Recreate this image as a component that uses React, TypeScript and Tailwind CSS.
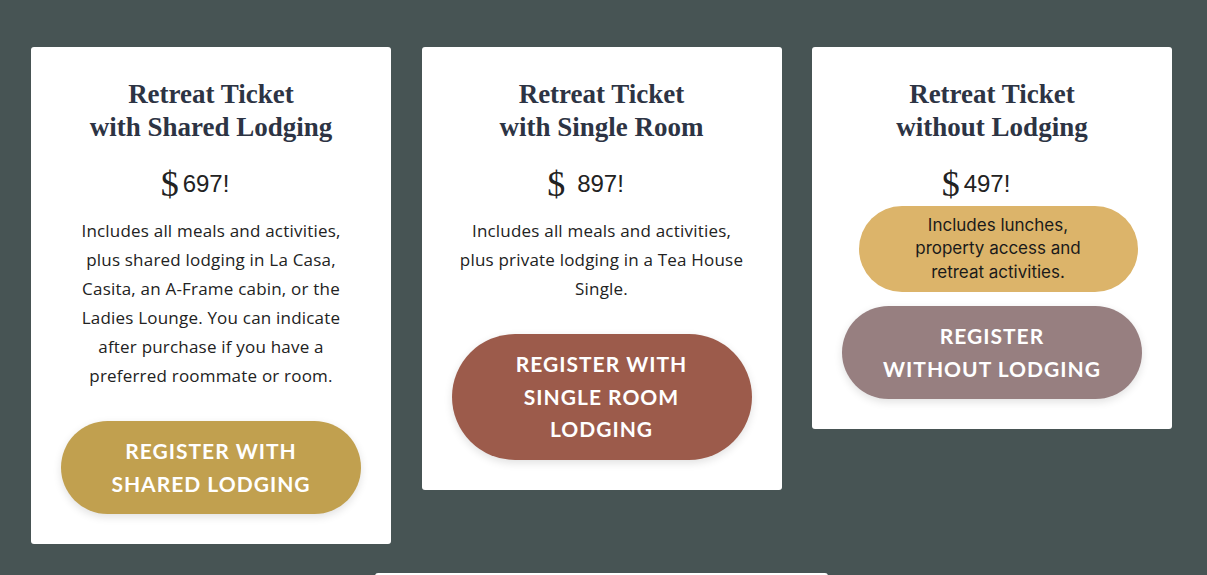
const cards = [
  {
    line2: "with Shared Lodging",
    price: "697!",
    gap: false,
    desc: [
      "Includes all meals and activities,",
      "plus shared lodging in La Casa,",
      "Casita, an A-Frame cabin, or the",
      "Ladies Lounge. You can indicate",
      "after purchase if you have a",
      "preferred roommate or room.",
    ],
    button: ["REGISTER WITH", "SHARED LODGING"],
    color: "bg-[#c1a04f]",
  },
  {
    line2: "with Single Room",
    price: "897!",
    gap: true,
    desc: ["Includes all meals and activities,", "plus private lodging in a Tea House", "Single."],
    button: ["REGISTER WITH", "SINGLE ROOM", "LODGING"],
    color: "bg-[#9c5b4b]",
  },
  {
    line2: "without Lodging",
    price: "497!",
    gap: false,
    desc: [] as string[],
    button: ["REGISTER", "WITHOUT LODGING"],
    color: "bg-[#977f80]",
  },
];

function Card({ card }: { card: (typeof cards)[number] }) {
  return (
    <div className="w-[360px] bg-white rounded-[3px] pt-[31px] pb-[30px] px-[30px] flex flex-col items-center">
      <h2 className="font-['Liberation_Serif',serif] font-bold text-[27px] leading-[33px] text-[#2d3444] text-center">
        Retreat Ticket
        <br />
        {card.line2}
      </h2>
      <div className="mt-[16px] h-[48px] flex items-center justify-center pr-[32px] text-[#222]">
        <span className="font-['Liberation_Serif',serif] text-[36px] leading-none">$</span>
        <span className={`font-['Liberation_Sans',sans-serif] text-[24px] ${card.gap ? "ml-[12px]" : "ml-[4px]"}`}>
          {card.price}
        </span>
      </div>
      {card.desc.length ? (
        <p className="mt-[8px] font-['Open_Sans',sans-serif] text-[17px] tracking-[0.2px] leading-[29px] text-[#222] text-center">
          {card.desc.map((l) => (
            <span key={l} className="block whitespace-nowrap">
              {l}
            </span>
          ))}
        </p>
      ) : (
        <div className="-mt-[2px] ml-[12px] w-[279px] h-[86px] rounded-full bg-[#dcb46a] flex items-center justify-center">
          <p className="font-['Inter',sans-serif] text-[17px] leading-[23.5px] text-[#1a1a1a] text-center w-[200px]">
            Includes lunches, property access and retreat activities.
          </p>
        </div>
      )}
      <button
        className={`${card.color} ${card.desc.length ? "mt-[31px]" : "mt-[14px]"} w-[300px] py-[14px] rounded-full text-white font-['Lato',sans-serif] font-bold text-[21px] tracking-[1px] leading-[32.5px] shadow-[0_3px_8px_rgba(0,0,0,0.12)]`}
      >
        {card.button.map((l) => (
          <div key={l}>{l}</div>
        ))}
      </button>
    </div>
  );
}

export default function App() {
  return (
    <div className="w-full h-[575px] overflow-hidden bg-[#475454]">
      <div className="pt-[47px] pl-[31px] flex items-start gap-[30.5px]">
        {cards.map((c) => (
          <Card key={c.line2} card={c} />
        ))}
      </div>
      <div className="mt-[29px] ml-[375px] w-[453px] h-[40px] bg-white rounded-t-[3px]" />
    </div>
  );
}
